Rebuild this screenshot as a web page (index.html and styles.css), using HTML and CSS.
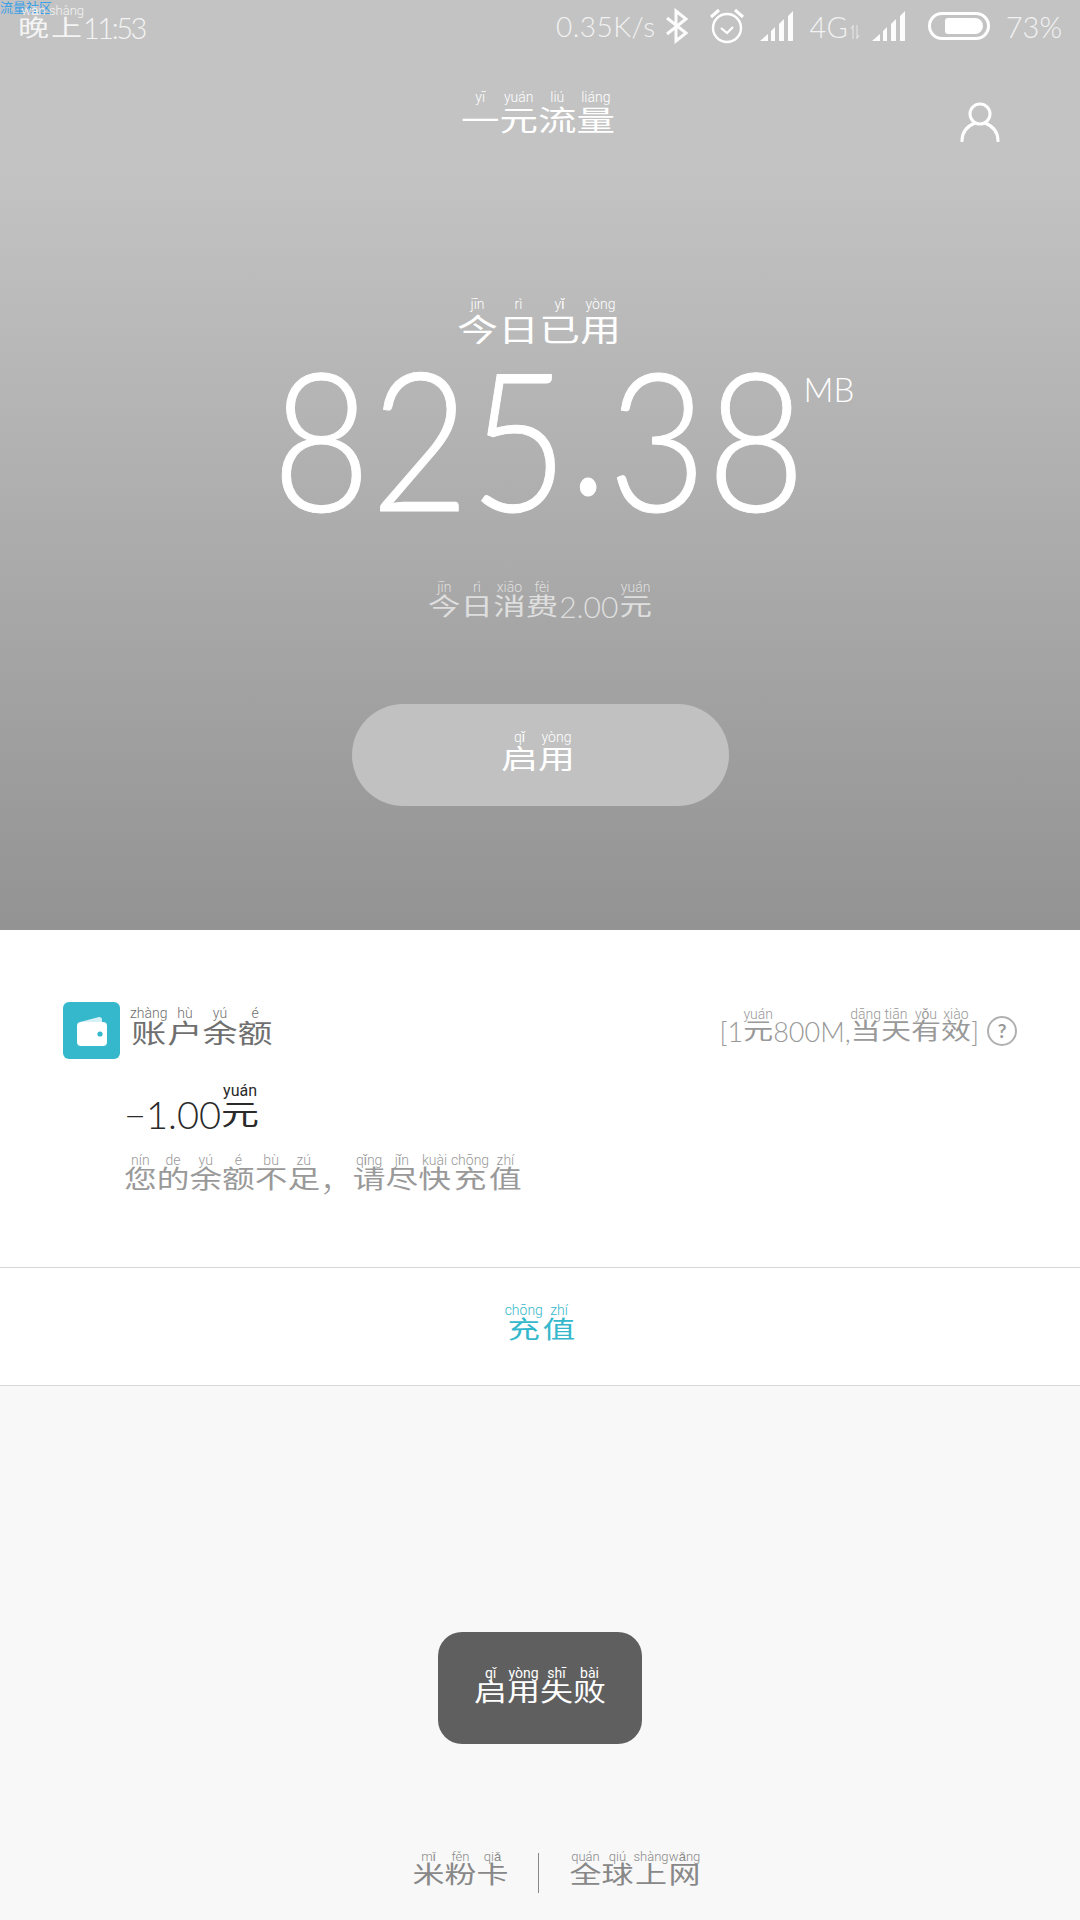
FILE: index.html
```html
<!DOCTYPE html>
<html lang="zh">
<head>
<meta charset="utf-8">
<title>一元流量</title>
<link rel="stylesheet" href="styles.css">
</head>
<body>
<div class="page">
  <span class="watermark">流量社区</span>
  <section class="hero">
    <div class="status">
      <div class="status-time"><ruby><span class="g">晚</span><rt>wǎn</rt></ruby><ruby><span class="g">上</span><rt>shàng</rt></ruby><span class="clock">11:53</span></div>
      <div class="status-icons">
        <span class="net">0.35K/s</span>
        <svg class="ic-bt" width="24" height="36" viewBox="0 0 24 36"><path d="M2 10 L21 25 L11 33 V3 L21 11 L2 26" fill="none" stroke="#fff" stroke-width="3" opacity=".95"/></svg>
        <svg class="ic-alarm" width="36" height="36" viewBox="0 0 36 36"><circle cx="18" cy="20" r="14" fill="none" stroke="#fff" stroke-width="2.4"/><path d="M12 20 L18 25 L24 19" fill="none" stroke="#fff" stroke-width="2.2"/><path d="M2 9 L10 2 M34 9 L26 2" stroke="#fff" stroke-width="3" fill="none"/></svg>
        <svg class="ic-sig" width="34" height="32" viewBox="0 0 34 32"><path d="M0 31 L8 24 V31Z M11 21 L15 17 V31 H11Z M19 14 L24 9 V31 H19Z M28 6 L33 1 V31 H28Z" fill="#fff" opacity=".95"/></svg>
        <span class="net-4g">4G</span>
        <svg class="ic-arrows" width="10" height="14" viewBox="0 0 10 14"><path d="M3 0 V14 M7 0 V14 M1 4 L3 1 M9 10 L7 13" stroke="#fff" stroke-width="1" fill="none" opacity=".6"/></svg>
        <svg class="ic-sig2" width="34" height="32" viewBox="0 0 34 32"><path d="M0 31 L8 24 V31Z M11 21 L15 17 V31 H11Z M19 14 L24 9 V31 H19Z M28 6 L33 1 V31 H28Z" fill="#fff" opacity=".95"/></svg>
        <span class="batt"><span class="batt-fill"></span></span>
        <span class="pct">73%</span>
      </div>
    </div>
    <header class="title-row">
      <h1 class="title"><ruby><span class="g">一</span><rt>yī</rt></ruby><ruby><span class="g">元</span><rt>yuán</rt></ruby><ruby><span class="g">流</span><rt>liú</rt></ruby><ruby><span class="g">量</span><rt>liáng</rt></ruby></h1>
      <svg class="ic-user" width="40" height="40" viewBox="0 0 40 40"><circle cx="20" cy="12" r="10" fill="none" stroke="#fff" stroke-width="3"/><path d="M2 39 C2 28 10 23 15 21 M38 39 C38 28 30 23 25 21" fill="none" stroke="#fff" stroke-width="3" stroke-linecap="round"/></svg>
    </header>
    <div class="used-label"><ruby><span class="g">今</span><rt>jīn</rt></ruby><ruby><span class="g">日</span><rt>rì</rt></ruby><ruby><span class="g">已</span><rt>yǐ</rt></ruby><ruby><span class="g">用</span><rt>yòng</rt></ruby></div>
    <div class="usage"><span class="usage-num">825<span class="usage-dot">.</span>38</span><span class="usage-unit">MB</span></div>
    <div class="cost"><ruby><span class="g">今</span><rt>jīn</rt></ruby><ruby><span class="g">日</span><rt>rì</rt></ruby><ruby><span class="g">消</span><rt>xiāo</rt></ruby><ruby><span class="g">费</span><rt>fèi</rt></ruby><span class="cost-num">2.00</span><ruby><span class="g">元</span><rt>yuán</rt></ruby></div>
    <button class="enable"><ruby><span class="g">启</span><rt>qǐ</rt></ruby><ruby><span class="g">用</span><rt>yòng</rt></ruby></button>
  </section>

  <section class="account">
    <div class="acc-head">
      <div class="acc-left">
        <span class="wallet">
          <svg width="30" height="30" viewBox="0 0 30 30"><path d="M3 6 L22 1 Q25 1 25 4 V6Z" fill="#fff" opacity=".8"/><rect x="0" y="6" width="30" height="24" rx="4" fill="#fff"/><circle cx="23" cy="18" r="2.6" fill="#35b8cc"/></svg>
        </span>
        <span class="acc-title"><ruby><span class="g">账</span><rt>zhàng</rt></ruby><ruby><span class="g">户</span><rt>hù</rt></ruby><ruby><span class="g">余</span><rt>yú</rt></ruby><ruby><span class="g">额</span><rt>é</rt></ruby></span>
      </div>
      <div class="acc-right">
        <span class="plan"><span class="plan-lat">[1</span><ruby><span class="g">元</span><rt>yuán</rt></ruby><span class="plan-lat">800M,</span><ruby><span class="g">当</span><rt>dāng</rt></ruby><ruby><span class="g">天</span><rt>tiān</rt></ruby><ruby><span class="g">有</span><rt>yǒu</rt></ruby><ruby><span class="g">效</span><rt>xiào</rt></ruby><span class="plan-lat">]</span></span>
        <span class="help">?</span>
      </div>
    </div>
    <div class="balance">−1.00<ruby><span class="g">元</span><rt>yuán</rt></ruby></div>
    <div class="notice"><ruby><span class="g">您</span><rt>nín</rt></ruby><ruby><span class="g">的</span><rt>de</rt></ruby><ruby><span class="g">余</span><rt>yú</rt></ruby><ruby><span class="g">额</span><rt>é</rt></ruby><ruby><span class="g">不</span><rt>bù</rt></ruby><ruby><span class="g">足</span><rt>zú</rt></ruby>，<ruby><span class="g">请</span><rt>qǐng</rt></ruby><ruby><span class="g">尽</span><rt>jǐn</rt></ruby><ruby><span class="g">快</span><rt>kuài</rt></ruby><ruby><span class="g">充</span><rt>chōng</rt></ruby><ruby><span class="g">值</span><rt>zhí</rt></ruby></div>
  </section>

  <section class="recharge"><ruby><span class="g">充</span><rt>chōng</rt></ruby><ruby><span class="g">值</span><rt>zhí</rt></ruby></section>

  <section class="bottom">
    <div class="toast"><ruby><span class="g">启</span><rt>qǐ</rt></ruby><ruby><span class="g">用</span><rt>yòng</rt></ruby><ruby><span class="g">失</span><rt>shī</rt></ruby><ruby><span class="g">败</span><rt>bài</rt></ruby></div>
    <nav class="links">
      <a class="link"><ruby><span class="g">米</span><rt>mǐ</rt></ruby><ruby><span class="g">粉</span><rt>fěn</rt></ruby><ruby><span class="g">卡</span><rt>qiǎ</rt></ruby></a>
      <span class="divider"></span>
      <a class="link"><ruby><span class="g">全</span><rt>quán</rt></ruby><ruby><span class="g">球</span><rt>qiú</rt></ruby><ruby><span class="g">上</span><rt>shàng</rt></ruby><ruby><span class="g">网</span><rt>wǎng</rt></ruby></a>
    </nav>
  </section>
</div>
</body>
</html>
```
FILE: styles.css
```css
* { box-sizing: border-box; }
html, body { margin: 0; padding: 0; }
body {
  width: 1080px;
  height: 1920px;
  overflow: hidden;
  font-family: "Lato", "Noto Sans CJK SC", sans-serif;
  font-weight: 300;
}
ruby { ruby-position: over; }
rt { position: relative; top: 15px; font-family: "Roboto", sans-serif; font-weight: 300; font-size: 14px; line-height: 14px; }
.g { display: inline-block; line-height: 1; font-family: "Noto Sans CJK SC", sans-serif; font-weight: 400; transform: scaleY(.75); }
.page { position: relative; width: 1080px; height: 1920px; display: flex; flex-direction: column; background: #f8f8f8; }
.watermark { position: absolute; left: 0; top: 0; font-size: 13px; line-height: 14px; color: #3aa0e8; font-weight: 400; font-family: "Noto Sans CJK SC", sans-serif; }

.hero {
  height: 930px;
  display: flex;
  flex-direction: column;
  align-items: center;
  color: #fff;
  background: linear-gradient(#c3c3c3 0, #c3c3c3 170px, #939393 930px);
}
.status { width: 100%; height: 56px; padding: 0 18px; display: flex; justify-content: space-between; align-items: flex-end; }
.status-time { font-size: 31px; line-height: 34px; color: #f4f4f4; margin-bottom: 11px; }
.status-time rt { font-size: 13px; }
.clock { font-size: 29px; letter-spacing: -2.5px; margin-left: 1px; }
.status-icons { display: flex; align-items: center; height: 44px; position: relative; top: -8px; }
.net { font-size: 28px; letter-spacing: 0.5px; color: #f2f2f2; }
.ic-bt { margin-left: 9px; }
.ic-alarm { margin-left: 20px; }
.ic-sig { margin-left: 15px; }
.net-4g { font-size: 29px; margin-left: 16px; color: #f2f2f2; }
.ic-arrows { margin-left: 2px; margin-top: 12px; }
.ic-sig2 { margin-left: 12px; }
.batt { margin-left: 22px; width: 62px; height: 28px; border: 3px solid #fff; border-radius: 14px; display: flex; align-items: center; justify-content: flex-end; padding-right: 4px; }
.batt-fill { width: 38px; height: 16px; background: #fff; border-radius: 3px 8px 8px 3px; }
.pct { font-size: 29px; margin-left: 16px; color: #f2f2f2; }

.title-row { position: relative; width: 100%; height: 86px; padding-right: 4px; display: flex; justify-content: center; align-items: flex-end; }
.title { margin: 0; font-size: 38.5px; line-height: 44px; font-weight: 300; }
.ic-user { position: absolute; left: 960px; top: 46px; }

.used-label { margin-top: 141px; font-size: 41px; line-height: 46px; padding-right: 2px; }
.usage { display: flex; margin-top: -26px; height: 240px; align-items: flex-start; padding-left: 46px; }
.usage-num { display: block; width: 526px; white-space: nowrap; transform: scaleX(.882); transform-origin: left top; font-size: 193px; line-height: 220px; font-weight: 300; -webkit-text-stroke: 1px #fff; }
.usage-dot { position: relative; top: -16px; }
.usage-unit { font-size: 33px; line-height: 40px; margin-top: 42px; margin-left: 6px; }
.cost { font-size: 32.5px; line-height: 40px; color: rgba(255,255,255,.65); margin-top: -1px; }
.cost-num { font-size: 30px; margin: 0 1px; }
.enable { margin-top: 78px; width: 377px; height: 102px; border: 0; border-radius: 51px; background: #c1c1c1; color: #fff; font: inherit; font-size: 37px; padding: 0 4px 14px 0; }

.account { height: 338px; background: #fff; padding: 72px 63px 0; border-bottom: 1px solid #d8d8d8; }
.acc-head { display: flex; justify-content: space-between; align-items: center; height: 57px; }
.acc-left, .acc-right { display: flex; align-items: center; }
.wallet { width: 57px; height: 57px; border-radius: 6px; background: #35b8cc; display: flex; align-items: center; justify-content: center; margin-right: 10px; }
.acc-title { font-size: 35px; color: #6f6f6f; margin-bottom: 16px; }
.plan { font-size: 30px; color: #999; margin-bottom: 20px; }
.plan-lat { font-size: 27px; }
.help { width: 30px; height: 30px; margin-left: 8px; border: 2px solid #b0b0b0; border-radius: 50%; display: flex; align-items: center; justify-content: center; color: #999; font-size: 19px; font-weight: 700; }
.balance { margin: 10px 0 0 61px; font-size: 38px; line-height: 50px; color: #2a2a2a; font-weight: 300; }
.balance rt { font-size: 16px; font-weight: 400; }
.notice { margin: 0 0 0 61px; font-size: 32.7px; line-height: 44px; color: #999; }

.recharge { height: 118px; padding-bottom: 16px; background: #fff; border-bottom: 1px solid #d8d8d8; display: flex; align-items: center; justify-content: center; font-size: 32.5px; color: #35b8cc; }

.bottom { flex: 1; position: relative; }
.toast { position: absolute; left: 438px; top: 246px; width: 204px; height: 112px; padding-bottom: 14px; border-radius: 24px; background: #5f5f5f; color: #fff; font-size: 33px; display: flex; align-items: center; justify-content: center; }
.toast rt { font-weight: 400; }
.links { position: absolute; left: 0; right: 0; top: 449px; padding-left: 33px; display: flex; justify-content: center; align-items: center; }
.link { font-size: 32px; color: #888; }
.link rt { font-size: 13px; }
.divider { width: 1px; height: 40px; background: #888; margin: 18px 30px 0; }
```
